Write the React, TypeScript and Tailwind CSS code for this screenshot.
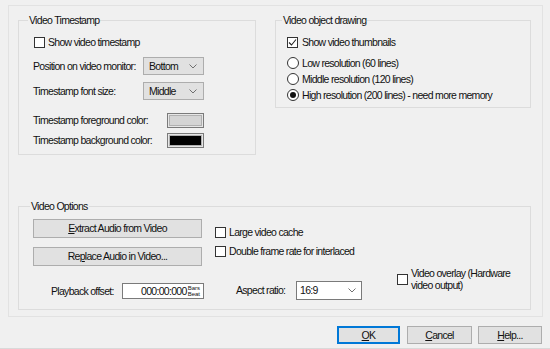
import React from 'react'

const font = { fontFamily: '"Liberation Sans", Arial, sans-serif' }

function CheckBox({ checked = false }: { checked?: boolean }) {
  return (
    <span className="flex h-[11px] w-[11px] shrink-0 items-center justify-center border border-[#333] bg-white">
      {checked && (
        <svg width="9" height="9" viewBox="0 0 9 9">
          <path d="M1 4.5 L3.5 7 L8 1.5" fill="none" stroke="#222" strokeWidth="1.1" />
        </svg>
      )}
    </span>
  )
}

function Radio({ checked = false }: { checked?: boolean }) {
  return (
    <span className="flex h-[12px] w-[12px] shrink-0 items-center justify-center rounded-full border border-[#333] bg-white">
      {checked && <span className="h-[6px] w-[6px] rounded-full bg-[#111]" />}
    </span>
  )
}

function Chevron() {
  return (
    <svg width="8" height="5" viewBox="0 0 8 5" className="shrink-0">
      <path d="M0.5 0.5 L4 4 L7.5 0.5" fill="none" stroke="#707070" strokeWidth="1" />
    </svg>
  )
}

function Combo({ value, w }: { value: string; w: string }) {
  return (
    <div className={`${w} flex h-[18px] items-center justify-between border border-[#adadad] bg-[#e1e1e1] pl-[5px] pr-[6px]`}>
      <span>{value}</span>
      <Chevron />
    </div>
  )
}

function Group({
  title,
  titleLeft,
  className,
  children,
}: {
  title: string
  titleLeft: string
  className: string
  children: React.ReactNode
}) {
  return (
    <div className={`relative border border-[#dcdcdc] ${className}`}>
      <span className={`absolute -top-[8px] ${titleLeft} bg-[#f0f0f0] px-[1px] leading-[14px]`}>{title}</span>
      {children}
    </div>
  )
}

function ColorButton({ fill }: { fill: string }) {
  return (
    <div className="h-[15px] w-[37px] border border-[#7a7a7a] bg-[#e6e6e6] p-[1px]">
      <div className={`h-full w-full border border-[#b0b0b0] ${fill}`} />
    </div>
  )
}

export default function App() {
  return (
    <div
      style={font}
      className="flex h-[349px] w-[550px] flex-col overflow-hidden whitespace-nowrap border-b border-[#d9d9d9] bg-[#f0f0f0] text-[10.5px] leading-[13px] tracking-[-0.7px] text-[#111]"
    >
      {/* tab page */}
      <div className="ml-[8px] mt-[5px] flex h-[312px] w-[535px] flex-col border border-[#e2e2e2]">
        <div className="flex items-start gap-[19px] pl-[9px] pt-[14px]">
          <Group title="Video Timestamp" titleLeft="left-[9px]" className="h-[135px] w-[238px]">
            <div className="flex flex-col pl-[14px] pt-[15px]">
              <div className="flex h-[13px] items-center">
                <span className="ml-[1px]">
                  <CheckBox />
                </span>
                <span className="ml-[3px]">Show video timestamp</span>
              </div>
              <div className="mt-[8px] flex h-[18px] items-center">
                <span className="w-[110px]">Position on video monitor:</span>
                <Combo value="Bottom" w="w-[61px]" />
              </div>
              <div className="mt-[7px] flex h-[18px] items-center">
                <span className="w-[110px]">Timestamp font size:</span>
                <Combo value="Middle" w="w-[61px]" />
              </div>
              <div className="mt-[13px] flex h-[15px] items-center">
                <span className="w-[134px]">Timestamp foreground color:</span>
                <ColorButton fill="bg-[#d4d4d4]" />
              </div>
              <div className="mt-[5px] flex h-[15px] items-center">
                <span className="w-[134px]">Timestamp background color:</span>
                <ColorButton fill="bg-black" />
              </div>
            </div>
          </Group>

          <Group title="Video object drawing" titleLeft="left-[6px]" className="h-[88px] w-[256px]">
            <div className="flex flex-col pl-[10px] pt-[15px]">
              <div className="flex h-[13px] items-center">
                <span className="ml-[1px]">
                  <CheckBox checked />
                </span>
                <span className="ml-[4px]">Show video thumbnails</span>
              </div>
              <div className="mt-[6px] flex h-[16px] items-center">
                <span className="ml-[1px]">
                  <Radio />
                </span>
                <span className="ml-[3px]">Low resolution (60 lines)</span>
              </div>
              <div className="flex h-[16px] items-center">
                <span className="ml-[1px]">
                  <Radio />
                </span>
                <span className="ml-[3px]">Middle resolution (120 lines)</span>
              </div>
              <div className="flex h-[16px] items-center">
                <span className="ml-[1px]">
                  <Radio checked />
                </span>
                <span className="ml-[3px]">High resolution (200 lines) - need more memory</span>
              </div>
            </div>
          </Group>
        </div>

        <Group title="Video Options" titleLeft="left-[11px]" className="ml-[9px] mt-[51px] h-[104px] w-[513px]">
          <div className="flex flex-col pl-[14px] pt-[12px]">
            <div className="flex items-start">
              <div className="flex w-[169px] flex-col">
                <button className="h-[19px] border border-[#adadad] bg-[#e1e1e1]">
                  <u>E</u>xtract Audio from Video
                </button>
                <button className="mt-[9px] h-[19px] border border-[#adadad] bg-[#e1e1e1]">
                  Re<u>p</u>lace Audio in Video...
                </button>
              </div>
              <div className="ml-[13px] flex flex-col pt-[7px]">
                <div className="flex h-[13px] items-center">
                  <CheckBox />
                  <span className="ml-[3px]">Large video cache</span>
                </div>
                <div className="mt-[6px] flex h-[13px] items-center">
                  <CheckBox />
                  <span className="ml-[3px]">Double frame rate for interlaced</span>
                </div>
              </div>
            </div>

            <div className="flex items-start">
              <div className="ml-[18px] mt-[17px] flex h-[16px] items-center">
                <span className="w-[71px]">Playback offset:</span>
                <div className="flex h-[16px] w-[82px] items-center justify-end border border-[#7a7a7a] bg-white pr-[3px]">
                  <span>000:00:000</span>
                  <span className="ml-[1px] flex flex-col text-[6px] leading-[6px] tracking-normal">
                    <span>Bars</span>
                    <span>Beat</span>
                  </span>
                </div>
              </div>
              <div className="ml-[32px] mt-[15px] flex h-[19px] items-center">
                <span className="w-[60px]">Aspect ratio:</span>
                <div className="flex h-[19px] w-[66px] items-center justify-between border border-[#7a7a7a] bg-white pl-[3px] pr-[5px]">
                  <span>16:9</span>
                  <Chevron />
                </div>
              </div>
              <div className="ml-[35px] mt-[1px] flex items-center">
                <CheckBox />
                <span className="ml-[3px] leading-[12px]">
                  Video overlay (Hardware
                  <br />
                  video output)
                </span>
              </div>
            </div>
          </div>
        </Group>
      </div>

      {/* dialog buttons */}
      <div className="ml-[337px] mt-[9px] flex">
        <button className="h-[18px] w-[63px] border-2 border-[#0078d7] bg-[#e1e1e1]">
          <u>O</u>K
        </button>
        <button className="ml-[7px] h-[18px] w-[65px] border border-[#adadad] bg-[#e1e1e1]">
          <u>C</u>ancel
        </button>
        <button className="ml-[6px] h-[18px] w-[64px] border border-[#adadad] bg-[#e1e1e1]">
          <u>H</u>elp...
        </button>
      </div>
    </div>
  )
}
